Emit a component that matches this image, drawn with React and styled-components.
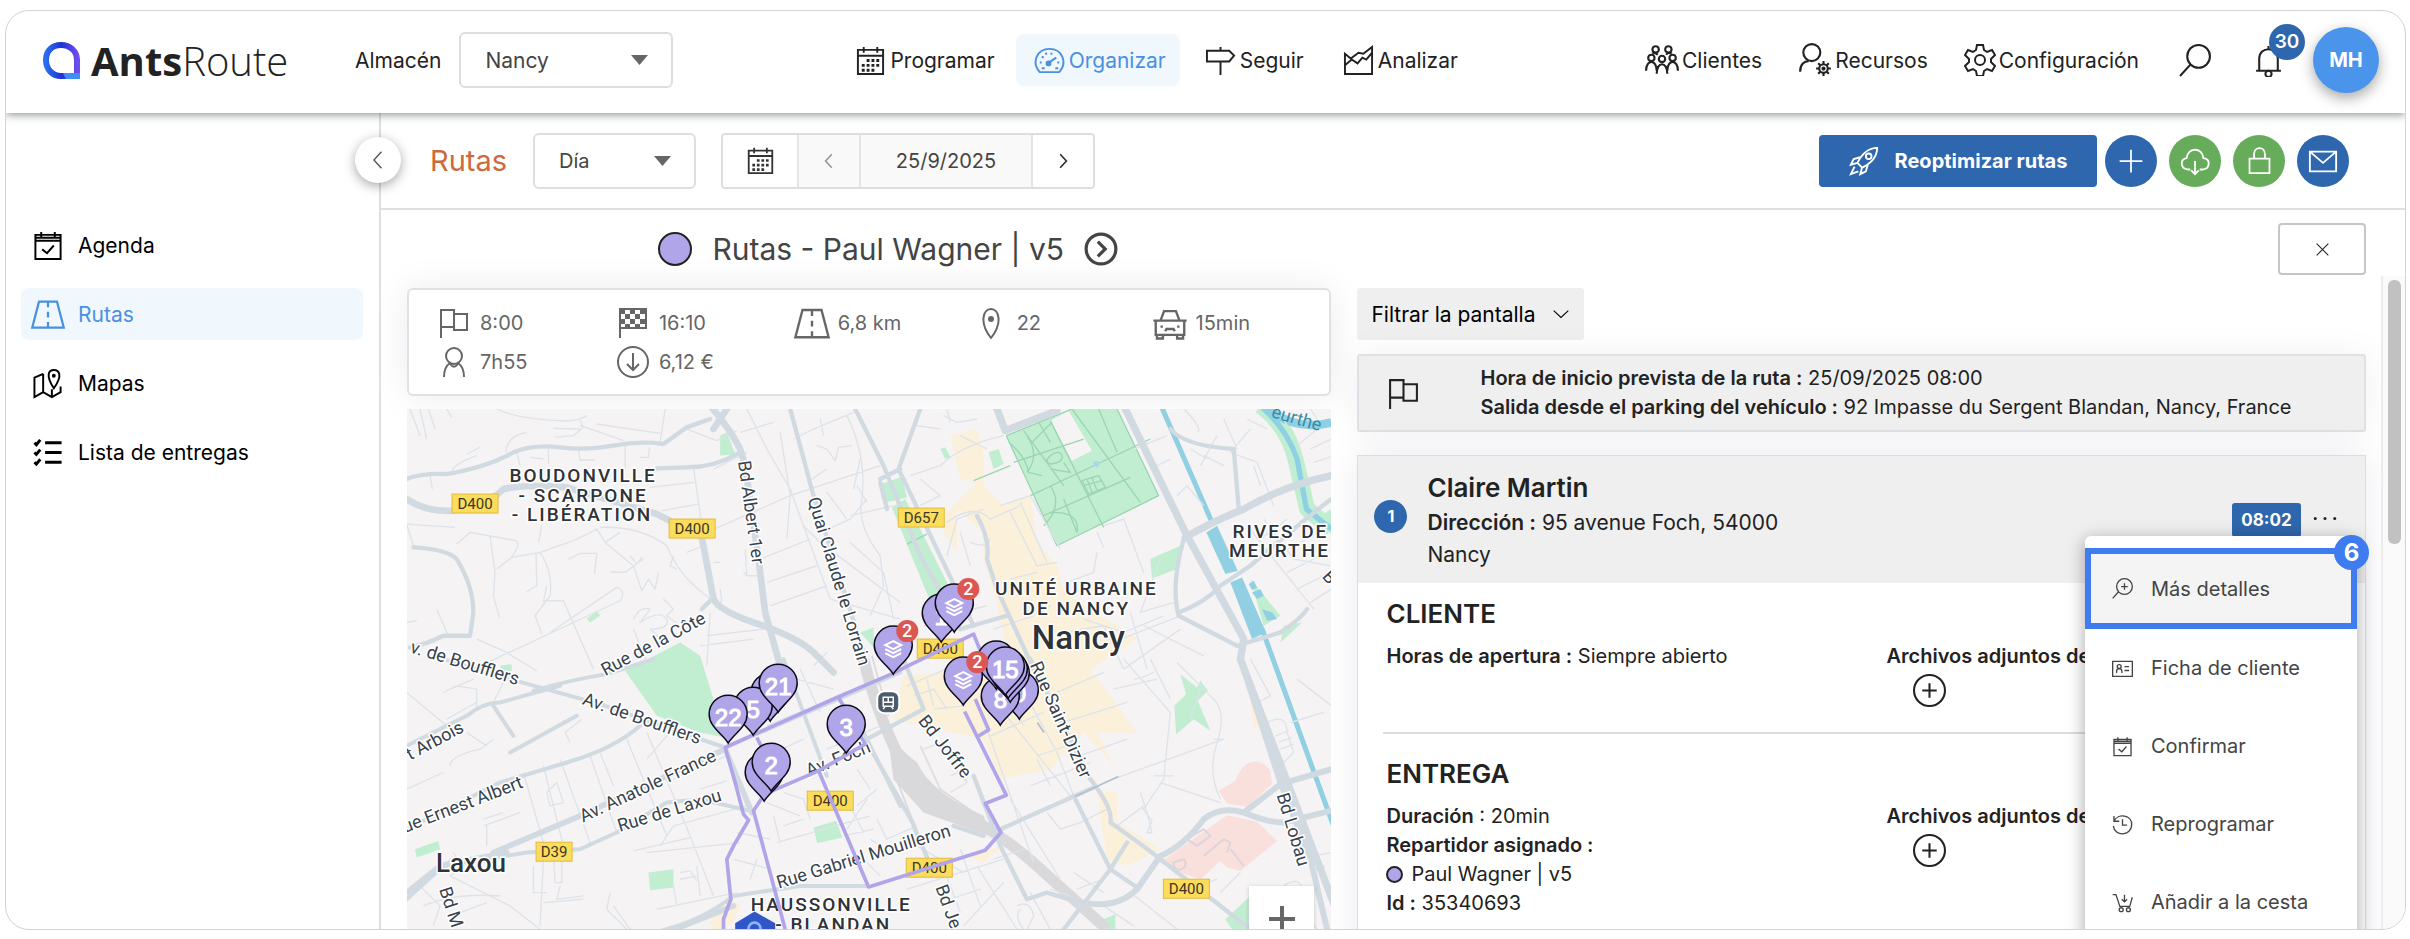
import React from 'react'
import styled, { createGlobalStyle } from 'styled-components'

const GlobalStyle = createGlobalStyle`
  * {
    box-sizing: border-box;
  }
  body {
    margin: 0;
    background: #ffffff;
    color: #222222;
    font-family: Inter, "Open Sans", sans-serif;
    font-size: 20px;
  }
  button, input, select {
    font: inherit;
    color: inherit;
    margin: 0;
  }
  h1, h2, h3, p, ul {
    margin: 0;
    padding: 0;
  }
  b {
    font-weight: 600;
  }
`

const Frame = styled.div`
  display: flex;
  flex-direction: column;
  height: calc(100vh - 19px);
  margin: 10px 4px 9px 5px;
  border: 1px solid #d2d3d5;
  border-radius: 24px;
  overflow: hidden;
`
const Header = styled.header`
  display: flex;
  align-items: center;
  flex-shrink: 0;
  height: 102px;
  padding: 0 26px 4px 36px;
  font-size: 21px;
  box-shadow: 0 2px 8px rgba(40, 50, 50, 0.5);
  z-index: 2;
`
const Logo = styled.a`
  display: flex;
  align-items: center;
  gap: 10px;
  width: 247px;
  color: #222222;
  font-family: "Open Sans", sans-serif;
  font-size: 40px;
  font-weight: 300;
  text-decoration: none;
  b {
    font-weight: 700;
  }
`
const DepotLabel = styled.label`
  margin: 0 18px 0 66px;
`
const SelectBox = styled.div`
  position: relative;
  width: ${(p) => p.$width};
  svg {
    position: absolute;
    right: 25px;
    top: 23px;
    pointer-events: none;
  }
`
const Select = styled.select`
  appearance: none;
  width: 100%;
  height: 56px;
  padding: 0 24px;
  border: 2px solid #dedede;
  border-radius: 6px;
  background: #ffffff;
  color: #444444;
`
const Nav = styled.nav`
  display: flex;
  gap: 7px;
  margin-left: 164px;
`
const NavLink = styled.a`
  display: flex;
  align-items: center;
  gap: 4px;
  height: 52px;
  padding: 0 14px 0 18px;
  border-radius: 8px;
  background: ${(p) => (p.$active ? '#f0f7fd' : 'transparent')};
  color: ${(p) => (p.$active ? '#4a90e2' : '#222222')};
  text-decoration: none;
`
const Tools = styled.div`
  display: flex;
  align-items: center;
  gap: 40px;
  margin-left: auto;
`
const ToolNav = styled.nav`
  display: flex;
  gap: 36px;
`
const ToolLink = styled.a`
  display: flex;
  align-items: center;
  gap: 3px;
  color: #222222;
  text-decoration: none;
`
const BareButton = styled.button`
  display: flex;
  padding: 0;
  border: none;
  background: none;
  cursor: pointer;
`
const BellButton = styled(BareButton)`
  position: relative;
  margin-right: -12px;
`
const Count = styled.span`
  position: absolute;
  left: 17px;
  top: -20px;
  width: 36px;
  height: 36px;
  border-radius: 50%;
  background: #2e67ad;
  color: #ffffff;
  font-size: 19px;
  font-weight: 600;
  line-height: 36px;
  text-align: center;
`
const Avatar = styled.button`
  width: 66px;
  height: 66px;
  border: none;
  border-radius: 50%;
  background: #4a94ec;
  color: #ffffff;
  font-size: 20px;
  font-weight: 700;
  box-shadow: 0 5px 14px rgba(0, 0, 0, 0.35);
`
const Body = styled.div`
  display: flex;
  flex: 1;
  min-height: 0;
`
const Sidebar = styled.aside`
  position: relative;
  flex-shrink: 0;
  width: 375px;
  padding: 106px 16px 0 15px;
  border-right: 2px solid #dedfe0;
  font-size: 21px;
`
const Collapse = styled.button`
  position: absolute;
  top: 24px;
  right: -22px;
  display: flex;
  align-items: center;
  justify-content: center;
  width: 46px;
  height: 46px;
  padding: 0;
  border: none;
  border-radius: 50%;
  background: #ffffff;
  color: #555555;
  box-shadow: 0 3px 12px rgba(0, 0, 0, 0.35);
  z-index: 1;
`
const SideList = styled.ul`
  display: grid;
  gap: 17px;
  list-style: none;
`
const SideLink = styled.a`
  display: flex;
  align-items: center;
  gap: 11px;
  height: 52px;
  padding-left: 8px;
  border-radius: 8px;
  background: ${(p) => (p.$active ? '#f0f7fd' : 'transparent')};
  color: ${(p) => (p.$active ? '#4a90e2' : '#000000')};
  text-decoration: none;
  svg {
    width: 38px;
  }
`
const Main = styled.main`
  display: flex;
  flex: 1;
  flex-direction: column;
  min-width: 0;
`
const Toolbar = styled.div`
  display: flex;
  align-items: center;
  flex-shrink: 0;
  height: 97px;
  padding: 0 56px 0 49px;
  border-bottom: 2px solid #dfe0e1;
`
const PageTitle = styled.h1`
  margin-right: 26px;
  color: #cc6a3c;
  font-size: 29px;
  font-weight: 400;
`
const DateGroup = styled.div`
  display: flex;
  height: 56px;
  margin-left: 25px;
  border: 2px solid #dedede;
  border-radius: 4px;
  overflow: hidden;
`
const DateButton = styled.button`
  display: flex;
  align-items: center;
  justify-content: center;
  width: ${(p) => (p.$wide ? '76px' : '60px')};
  padding: 0;
  border: none;
  border-right: ${(p) => (p.$wide ? '2px solid #e4e4e4' : 'none')};
  background: ${(p) => (p.$muted ? '#f9f9f9' : '#ffffff')};
  color: ${(p) => (p.$muted ? '#999999' : '#333333')};
`
const DateInput = styled.input`
  width: 174px;
  border: 2px solid #e4e4e4;
  border-width: 0 2px;
  border-radius: 0;
  background: #f9f9f9;
  color: #444444;
  text-align: center;
`
const Actions = styled.div`
  display: flex;
  gap: 12px;
  margin-left: auto;
`
const PrimaryButton = styled.button`
  display: flex;
  align-items: center;
  justify-content: center;
  gap: 16px;
  width: 278px;
  height: 52px;
  margin-right: -4px;
  padding: 0;
  border: none;
  border-radius: 4px;
  background: #2e67ad;
  color: #ffffff;
  font-weight: 700;
`
const RoundButton = styled.button`
  display: flex;
  align-items: center;
  justify-content: center;
  width: 52px;
  height: 52px;
  padding: 0;
  border: none;
  border-radius: 50%;
  background: ${(p) => (p.$green ? '#67ac5b' : '#2e67ad')};
  color: #ffffff;
`
const TitleRow = styled.div`
  display: grid;
  grid-template-columns: minmax(0, 11fr) minmax(0, 12fr);
  gap: 26px;
  align-items: center;
  flex-shrink: 0;
  height: 66px;
  padding: 12px 39px 0 26px;
`
const RouteTitle = styled.h2`
  display: flex;
  align-items: center;
  justify-content: center;
  gap: 20px;
  padding-left: 38px;
  color: #444444;
  font-size: 30px;
  font-weight: 400;
`
const Dot = styled.span`
  display: inline-block;
  flex-shrink: 0;
  width: ${(p) => p.$size};
  height: ${(p) => p.$size};
  border: 2px solid #222222;
  border-radius: 50%;
  background: #b1a5ea;
`
const CloseButton = styled.button`
  display: flex;
  align-items: center;
  justify-content: center;
  justify-self: end;
  width: 88px;
  height: 52px;
  border: 2px solid #c6c6c6;
  border-radius: 4px;
  background: #ffffff;
`
const Content = styled.div`
  display: flex;
  flex: 1;
  min-height: 0;
`
const Columns = styled.div`
  display: grid;
  flex: 1;
  grid-template-columns: minmax(0, 11fr) minmax(0, 12fr);
  gap: 26px;
  align-items: start;
  padding: 12px 15px 0 26px;
`
const Track = styled.div`
  width: 24px;
  padding: 4px 5px;
  border-left: 2px solid #ececec;
  background: #fafafa;
`
const Thumb = styled.div`
  width: 13px;
  height: 264px;
  border-radius: 6px;
  background: #c1c1c1;
`
const Stats = styled.div`
  display: grid;
  grid-template-columns: repeat(5, 1fr);
  align-content: start;
  height: 108px;
  padding: 13px 0 0 26px;
  border: 2px solid #e0e1e2;
  border-radius: 6px;
  background: #ffffff;
  box-shadow: 0 0 36px rgba(30, 30, 60, 0.08);
`
const Stat = styled.div`
  display: flex;
  align-items: center;
  gap: 7px;
  height: 39px;
  color: #666666;
  svg {
    flex-shrink: 0;
    width: 38px;
  }
`
const MapBox = styled.div`
  position: relative;
  margin-top: 13px;
`
const MapSvg = styled.svg`
  display: block;
  width: 100%;
  height: auto;
`
const ZoomButton = styled.button`
  position: absolute;
  top: 477px;
  right: 17px;
  display: flex;
  align-items: center;
  justify-content: center;
  width: 65px;
  height: 65px;
  border: none;
  background: #ffffff;
  color: #666666;
  box-shadow: 0 1px 4px rgba(0, 0, 0, 0.2);
`
const FilterButton = styled.button`
  display: flex;
  align-items: center;
  gap: 16px;
  height: 52px;
  padding: 0 14px;
  border: none;
  border-radius: 3px;
  background: #efefef;
  color: #000000;
  font-size: 21px;
`
const Banner = styled.section`
  display: flex;
  align-items: center;
  gap: 60px;
  height: 78px;
  margin-top: 14px;
  padding: 0 28px;
  border: 2px solid #e0e1e4;
  border-radius: 3px;
  background: #efefef;
  box-shadow: 0 0 36px rgba(30, 30, 90, 0.06);
  line-height: 29px;
`
const Stop = styled.article`
  margin-top: 23px;
  border: 1px solid #dcdde0;
  box-shadow: 0 0 36px rgba(30, 30, 90, 0.08);
`
const StopHead = styled.div`
  position: relative;
  display: flex;
  align-items: center;
  height: 127px;
  padding: 0 28px 0 16px;
  background: #efefef;
  font-size: 21px;
  line-height: 32px;
`
const StopNumber = styled.span`
  width: 33px;
  height: 33px;
  margin: 0 20px 6px 0;
  border-radius: 50%;
  background: #2e67ad;
  color: #ffffff;
  font-size: 16px;
  font-weight: 700;
  line-height: 33px;
  text-align: center;
`
const StopInfo = styled.div`
  width: 400px;
`
const StopName = styled.h3`
  font-size: 26px;
  line-height: 38px;
  font-weight: 600;
`
const TimeTag = styled.span`
  width: 69px;
  height: 34px;
  margin: 0 12px 0 auto;
  border-radius: 3px;
  background: #2e67ad;
  color: #ffffff;
  font-size: 17px;
  font-weight: 700;
  line-height: 34px;
  text-align: center;
`
const Section = styled.section`
  display: grid;
  grid-template-columns: 500px 1fr;
  align-content: start;
  height: ${(p) => p.$height};
  margin: 0 25px;
  padding: ${(p) => p.$pad} 3px 0;
  border-bottom: 2px solid #dcdcdc;
  line-height: 29px;
`
const SectionTitle = styled.h3`
  grid-column: 1 / 3;
  margin-bottom: 11px;
  font-size: 26px;
  line-height: 34px;
  font-weight: 600;
`
const Assigned = styled.p`
  display: flex;
  align-items: center;
  gap: 8px;
`
const AddButton = styled(BareButton)`
  margin: 3px 0 0 27px;
`
const Menu = styled.ul`
  position: absolute;
  top: 80px;
  right: 8px;
  width: 272px;
  padding: 12px 0;
  border-radius: 6px;
  background: #ffffff;
  box-shadow: 0 4px 18px rgba(0, 0, 0, 0.35);
  font-size: 20px;
  list-style: none;
  z-index: 3;
`
const MenuButton = styled.button`
  display: flex;
  align-items: center;
  gap: 18px;
  width: 100%;
  height: ${(p) => (p.$active ? '81px' : '78px')};
  padding: ${(p) => (p.$active ? '0 21px' : '0 27px')};
  border: ${(p) => (p.$active ? '6px solid #3f7cf0' : 'none')};
  background: ${(p) => (p.$active ? '#f4f4f4' : '#ffffff')};
  color: #444444;
`
const StepBadge = styled.span`
  position: absolute;
  top: -1px;
  right: -12px;
  width: 35px;
  height: 35px;
  border-radius: 50%;
  background: #3f7cf0;
  color: #ffffff;
  font-size: 24px;
  font-weight: 700;
  line-height: 35px;
  text-align: center;
`

// all line icons share a 32 unit grid
const shapes = {
  calendar: (
    <>
      <path d="M3 5h26v25H3zM3 11h26M9 2v6M23 2v6" />
      <path d="M12 16h3M17 16h3M22 16h3M7 21h3M12 21h3M17 21h3M22 21h3M7 26h3M12 26h3M17 26h3" strokeWidth="3" />
    </>
  ),
  check: <path d="M3 5h26v25H3zM3 8h26M9 2v5M23 2v5M3 11h26M10 20l5 4 7-8" />,
  gauge: (
    <>
      <path d="M6 28C-3 18 3 4 16 4s19 14 10 24zM14 19l9-6" />
      <circle cx="15" cy="19" r="2" fill="currentColor" />
      <path d="M6 18h2M24 18h2M8 12l2 1M12 8l1 2M18 8v2M8 24h3M22 24h3" />
    </>
  ),
  sign: <path d="M16 2v4M2 6h23l5 5-5 6H2zM16 17v14" />,
  area: <path d="M2 30V9l6 5 8-6 5 1 9-7v28zM2 21l7-6 6 4 5-6 4 2 6-7" />,
  people: (
    <>
      <circle cx="10" cy="6" r="3" />
      <circle cx="22" cy="6" r="3" />
      <circle cx="6" cy="14" r="3" />
      <circle cx="16" cy="15" r="3" />
      <circle cx="26" cy="14" r="3" />
      <path d="M1 26c0-11 10-11 10 0M21 26c0-11 10-11 10 0M11 29c0-12 10-12 10 0M7 10c1-1 3-1 5 1M20 11c1-2 4-2 5-1" />
    </>
  ),
  person: (
    <>
      <circle cx="13" cy="9" r="8" />
      <path d="M2 27c0-7 4-10 8-10" />
      <circle cx="24" cy="24" r="4" />
      <circle cx="24" cy="24" r="1" />
      <path d="M24 17v3M24 28v3M17 24h3M28 24h3M19 19l2 2M27 27l2 2M29 19l-2 2M21 27l-2 2" />
    </>
  ),
  gear: (
    <>
      <path d="M13 1h6l1 5 3 2 5-2 3 5-4 4v3l4 4-3 5-5-2-3 2-1 5h-6l-1-5-3-2-5 2-3-5 4-4v-3l-4-4 3-5 5 2 3-2z" />
      <circle cx="16" cy="16" r="5" />
    </>
  ),
  search: (
    <>
      <circle cx="19" cy="12" r="11" />
      <path d="M11 20L1 31" />
    </>
  ),
  bell: (
    <>
      <path d="M4 26h24M7 26V14c0-12 18-12 18 0v12M16 2v3" />
      <circle cx="16" cy="29" r="3" />
    </>
  ),
  road: <path d="M8 5h16l6 23H2zM16 5v5M16 14v5M16 23v5" />,
  map: (
    <>
      <path d="M11 6L2 10v20l9-5 9 5 9-5V19M11 6v19M20 30v-8" />
      <path d="M22 21c-9-14-5-19 0-19s10 5 0 19z" />
      <circle cx="22" cy="8" r="1" />
    </>
  ),
  list: <path d="M13 6h17M13 16h17M13 26h17M2 6l2 2 4-5M2 16l2 2 4-5M2 26l2 2 4-5" strokeWidth="3" />,
  left: <path d="M21 4L10 16l11 12" />,
  right: <path d="M11 4l11 12-11 12" />,
  down: <path d="M3 10l13 12 13-12" />,
  rocket: (
    <>
      <path d="M9 18C14 8 20 2 30 2c0 10-6 16-16 21zM12 12L5 14l-3 6 7-2M20 20l-2 7-6 3 2-7M6 22l-4 8 8-3" />
      <circle cx="21" cy="11" r="3" />
    </>
  ),
  plus: <path d="M16 3v26M3 16h26" />,
  cloud: <path d="M11 25H8c-8-1-8-11-1-12 1-12 17-12 18 0 8 1 7 11 0 12h-4M16 16v14M12 26l4 4 4-4" />,
  lock: <path d="M5 14h22v16H5zM10 14V9c0-9 12-9 12 0v5" />,
  mail: <path d="M2 6h28v21H2zM2 6l14 12L30 6" />,
  next: (
    <>
      <circle cx="16" cy="16" r="14" strokeWidth="3" />
      <path d="M13 9l7 7-7 7" strokeWidth="3" />
    </>
  ),
  close: <path d="M5 5l22 22M27 5L5 27" />,
  flag: <path d="M3 31V3h13v17H3M16 7h13v16H16z" />,
  finish: (
    <>
      <path d="M3 31V2h26v19H3" />
      <path d="M3 2h5v5H3zM13 2h5v5h-5zM23 2h6v5h-6zM8 7h5v5H8zM18 7h5v5h-5zM3 12h5v5H3zM13 12h5v5h-5zM23 12h6v5h-6zM8 17h5v4H8zM18 17h5v4h-5z" fill="currentColor" stroke="none" />
    </>
  ),
  pin: (
    <>
      <path d="M16 31C4 16 8 2 16 2s12 14 0 29z" />
      <circle cx="16" cy="12" r="2" fill="currentColor" />
    </>
  ),
  car: <path d="M8 14l3-8h10l3 8M4 14h24v12H4zM2 14h28M5 26v3h5v-3M22 26v3h5v-3M8 19h2M22 19h2M12 23l1-2h6l1 2" />,
  driver: (
    <>
      <circle cx="16" cy="10" r="8" />
      <path d="M6 31c0-8 3-12 6-14 2 5 6 5 8 0 3 2 6 6 6 14" />
    </>
  ),
  cost: (
    <>
      <circle cx="16" cy="16" r="15" />
      <path d="M16 7v17M10 18l6 6 6-6" />
    </>
  ),
  add: (
    <>
      <circle cx="16" cy="16" r="15" />
      <path d="M16 9v14M9 16h14" />
    </>
  ),
  dots: (
    <g fill="currentColor" stroke="none">
      <circle cx="3" cy="14" r="2" />
      <circle cx="16" cy="14" r="2" />
      <circle cx="29" cy="14" r="2" />
    </g>
  ),
  detail: (
    <>
      <circle cx="19" cy="13" r="12" />
      <path d="M10 21L1 31M19 8v10M14 13h10" />
    </>
  ),
  card: (
    <>
      <path d="M1 5h30v23H1zM19 13h7M19 19h7" />
      <circle cx="11" cy="13" r="3" />
      <path d="M7 23v-3c0-5 8-5 8 0v3" />
    </>
  ),
  history: <path d="M3 3v8h8M3 11C9-2 31 1 30 17 29 34 4 35 2 18M16 8v9h7" />,
  cart: (
    <>
      <path d="M1 4h5l6 18h15l4-14M19 4v11M15 11l4 4 4-4" />
      <circle cx="14" cy="27" r="3" />
      <circle cx="25" cy="27" r="3" />
    </>
  ),
}

const Icon = ({ name, size = 30, stroke = 2 }) => (
  <svg width={size} height={size} viewBox="0 0 32 32" fill="none" stroke="currentColor" strokeWidth={stroke} aria-hidden="true">
    {shapes[name]}
  </svg>
)

const Caret = () => (
  <svg width="17" height="10" viewBox="0 0 17 10" aria-hidden="true">
    <path d="M0 0h17L8.500 10z" fill="#666666" />
  </svg>
)

const LogoMark = () => (
  <svg width="39" height="39" viewBox="0 0 39 39" aria-hidden="true">
    <defs>
      <linearGradient id="mark" x1="0" y1="0" x2="1" y2="0">
        <stop offset="0" stopColor="#2b6cf0" />
        <stop offset="0.500" stopColor="#1f34d6" />
        <stop offset="1" stopColor="#6b4cf0" />
      </linearGradient>
    </defs>
    <path d="M4 19C4 10 10 4 19 4s16 6 16 15v16H19C10 35 4 28 4 19z" fill="none" stroke="url(#mark)" strokeWidth="6" />
    <path d="M21 32h17v6H24z" fill="#3f8df5" />
  </svg>
)

const navItems = [
  ['calendar', 'Programar'],
  ['gauge', 'Organizar'],
  ['sign', 'Seguir'],
  ['area', 'Analizar'],
]
const toolItems = [
  ['people', 'Clientes', 34],
  ['person', 'Recursos', 34],
  ['gear', 'Configuración', 32],
]
const sideItems = [
  ['check', 'Agenda'],
  ['road', 'Rutas'],
  ['map', 'Mapas'],
  ['list', 'Lista de entregas'],
]
const stats = [
  ['flag', '8:00'],
  ['finish', '16:10'],
  ['road', '6,8 km'],
  ['pin', '22'],
  ['car', '15min'],
  ['driver', '7h55'],
  ['cost', '6,12 €'],
]
const menuItems = [
  ['detail', 'Más detalles'],
  ['card', 'Ficha de cliente'],
  ['check', 'Confirmar'],
  ['history', 'Reprogramar'],
  ['cart', 'Añadir a la cesta'],
]

const mapLabels = [
  ['BOUDONVILLE', 176, 73],
  ['- SCARPONE', 176, 93],
  ['- LIBÉRATION', 175, 112],
  ['UNITÉ URBAINE', 669, 186],
  ['DE NANCY', 669, 206],
  ['RIVES DE', 873, 129],
  ['MEURTHE', 872, 148],
  ['HAUSSONVILLE', 424, 502],
  ['- BLANDAN', 426, 522],
]
// text, x, y, angle, anchor
const streets = [
  ['Bd Albert 1er', 338, 104, 82, 'middle'],
  ['Quai Claude le Lorrain', 426, 174, 73, 'middle'],
  ['Rue de la Côte', 249, 240, -28, 'middle'],
  ['v. de Boufflers', 110, 276, 17, 'end'],
  ['Av. de Boufflers', 233, 315, 19, 'middle'],
  ['t Arbois', 58, 322, -28, 'end'],
  ['ue Ernest Albert', 117, 378, -21, 'end'],
  ['Av. Anatole France', 243, 382, -25, 'middle'],
  ['Rue de Laxou', 264, 407, -17, 'middle'],
  ['Bd M', 32, 480, 72, 'start'],
  ['Av. Foch', 433, 355, -22, 'middle'],
  ['Bd Joffre', 533, 341, 52, 'middle'],
  ['Rue Saint-Dizier', 648, 313, 66, 'middle'],
  ['Bd Lobau', 880, 422, 73, 'middle'],
  ['Rue Gabriel Mouilleron', 458, 453, -17, 'middle'],
  ['Bd Je', 528, 478, 70, 'start'],
  ['B', 914, 168, 48, 'start'],
]
const shields = [
  ['D400', 68, 95],
  ['D400', 285, 120],
  ['D657', 514, 109],
  ['D400', 533, 240],
  ['D39', 147, 443],
  ['D400', 423, 392],
  ['D400', 522, 459],
  ['D400', 779, 480],
]
// x, y, label, badge
const pins = [
  [534, 204, '1'],
  [547, 194, 'stack', '2'],
  [486, 236, 'stack', '2'],
  [612, 281, '0'],
  [593, 287, '8'],
  [589, 251, ''],
  [603, 264, ''],
  [601, 260, ''],
  [598, 257, '15'],
  [556, 267, 'stack', '2'],
  [363, 283, ''],
  [346, 297, '5'],
  [371, 274, '21'],
  [321, 305, '22'],
  [357, 363, ''],
  [364, 353, '2'],
  [439, 315, '3'],
]

const Pin = ({ x, y, label, badge }) => (
  <g transform={`translate(${x} ${y})`}>
    <path d="M0 29C-5 20-19 13-19 0A19 19 0 0 1 19 0C19 13 5 20 0 29z" fill="#b1a5ea" stroke="#0c0a18" strokeWidth="1.500" />
    {label === 'stack' ? (
      <g fill="none" stroke="#ffffff" strokeWidth="2">
        <path d="M-8 0l8-4 8 4-8 4zM-8 4l8 4 8-4M-8 8l8 4 8-4" />
      </g>
    ) : (
      <text y="12" textAnchor="middle" fontFamily="Liberation Sans, sans-serif" fontSize="24" fill="#ffffff" stroke="#ffffff">
        {label}
      </text>
    )}
    {badge && (
      <>
        <circle cx="14" cy="-14" r="11" fill="#dc5752" />
        <text x="14" y="-8" textAnchor="middle" fontSize="18" fontWeight="500" fill="#ffffff">{badge}</text>
      </>
    )}
  </g>
)

const CityMap = () => (
  <MapSvg viewBox="0 0 924 540" role="img" aria-label="Mapa de Nancy" fontFamily="Roboto, sans-serif">
    <rect width="924" height="540" fill="#f5f3f4" />
    <g transform="scale(0.333333)" fill="none" strokeLinejoin="round">
      {/* built up and green areas */}
      <g fill="#fbf0da">
        <path transform="translate(1329 -30)" d="M300 110L380 90 400 160 400 260 460 320 540 290 560 430 620 500 640 580 860 720 720 810 860 1000 740 1000 790 1100 700 1000 600 1110 450 1140 400 1020 130 960 160 830 480 800 440 610 400 480 400 400 320 330 320 460 280 400 290 340 380 250 330 240z" />
        <path transform="translate(1329 750)" d="M740 390l60 10v90l130 80-100 50-60-20-20-130zM1200 130l20 0 20 70-30 10zM350 590l110-30-60 50z" />
        <path transform="translate(-21 750)" d="M980 710l40 30-20 50-60 30-10-30z" />
      </g>
      <g fill="#c1edd0">
        <path transform="translate(1329 -30)" d="M468 110L665 30H800L925 290 620 440zM90 255l65-20 15 60-65 15zM125 325l40-25 150 300-70 20zM900 480l90-40-10 70-75 28zM1290 730l10-50 55-10zM1410 350l33-20v80zM415 160l30-10 15 45-30 15zM1200 540l90 110-50 30zM270 150l15-5 15 30-15 5zM30 700l40-15v60z" />
        <path transform="translate(-21 -30)" d="M960 110l20-10 25 65-45 5zM1440 260l60-25v50l-55 15zM560 660l30-25 10 15-30 20z" />
        <path transform="translate(-21 750)" d="M675 35L840-50 900-10 975 235 900 220 770 170zM45 570l70-25 5 25-70 25zM745 640l75-10v55l-70 8zM1240 505l68-20 18 50-75 17zM300 20l35-5v20l-25 10z" />
        <path transform="translate(1329 750)" d="M990 45l50 40 10-20 22 30-30 30 38 90-50-35-53 45-5-85 35-35zM1125 780l70-65v95h-50zM760 780l35-15v45h-20z" />
      </g>
      <path transform="translate(1329 -30)" d="M600 65l55-30 70 120-60 30z" fill="#f5f3f4" />
      <g fill="#fae0dc" transform="translate(1329 750)">
        <path d="M1105 395l50-30c20-60 70-80 105-30l5 40-75 68-60-10z" />
        <path d="M1070 510l60-42 90 20 60 57-110 90-40-10-20-20-60 55-60-20-60-30z" />
      </g>

      {/* park paths */}
      <g stroke="#9bd5b3" strokeWidth="4" transform="translate(1329 -30)">
        <path d="M468 110L665 30M800 30L925 290L620 440L468 110M520 95L640 260M600 65L760 385M665 30L870 310M745 30L800 160M490 190L700 120M540 290L900 120M580 350L840 235M530 110q40 60 0 110M560 60l40 70M545 130l60-60M600 170q30-20 35 0t-35 25q-20-10 0-25M580 380q60-60 20-120M610 340q80 0 70 60M640 300l40 100M475 130q50 40 60 90l40 10M600 210l60 10-20-30M170 435l60-30M370 245l110-45" />
        <path d="M695 245l50-15 20 35-50 20zM710 240l15 40M725 235l15 40M700 260l55-15" />
      </g>

      {/* water */}
      <g transform="translate(1329 -30)">
        <path d="M1230 20q80 60 105 160l35 150 73 60" stroke="#c1edd0" strokeWidth="48" />
        <path d="M1230 20q80 70 110 160l28 150 75 60" stroke="#8fd1e4" strokeWidth="16" />
        <path d="M1240 20q90 80 203 50" stroke="#8fd1e4" strokeWidth="26" />
        <path d="M932 20L1085 370M1235 690L1460 1310" stroke="#90d0e2" strokeWidth="15" />
        <path d="M1068 400l32-20 62 135-37 10zM1140 550l35-15 72 165-42 20zM1195 555l15-10 10 20-15 8zM1205 580l25-10 10 20-20 10zM1235 630l30 10 15 20-30 5z" fill="#90d0e2" />
        <circle cx="738" cy="195" r="9" fill="#a8d8ea" />
      </g>

      {/* railway */}
      <g stroke="#d9d9dc" transform="translate(1329 750)">
        <path d="M40 0q30 130 90 260 60 150 180 190 140 70 250 170l210 190" strokeWidth="34" />
        <path d="M110 200q20 60 90 110 40 90 200 160l20 60-200-70-90-100z" fill="#d9d9dc" />
        <path d="M25 0l80 210M65-10l50 180M130 340l60 150M210 260l60 130 130 90" strokeWidth="5" />
      </g>

      {/* side streets */}
      <g stroke="#dde3e9" strokeWidth="4">
        <path transform="translate(-21 -30)" d="M290 30Q350 60 480 65 530 70 560 50M590 75l190 28M795 30l-15 100M540 65l10 20-30 25-55 5M460 88l80 2M540 80q60 20 130 45M155 215q15-25 75-45M318 160q2-50 62-60M90 230l7 40M445 150v45M350 160l10 40M675 140v70M535 155l5 28h45M720 175h25l3-30M20 375l145 10M20 375l20 65M170 435l40-35 140 25 5 15-20 35-45 35M270 412l15 108-5 70 18 65M335 475l85-15 100-35 70-35 25 40 85 70 25 75 20-35 20 30 10-50M615 430l45-30M420 460q40 60 30 130l-45 60 20 55M408 465l2 95-30 18M505 480l35-17h50l-7 62M630 518l45 2 55-40M690 470l20 25 15-20M430 605h60l90 205M430 610l10-50M450 700l200-135q30 10 10 40L220 810M600 385q120-5 200 55 40 100 140 165M880 205l30 210M750 265l130-15M785 335l110-20M920 400l250-110 270-90M1040 30l60 120 70 120 40 110 80 220M1140 100l30 190-10 130M1100 550l150-50M1110 620l170-60M1080 480l150-60M920 710l170-20M900 740l160-20M700 690l40 100M1300 460l200 150M1260 60l10 50M1340 50q60 120 45 250-15 80 55 170l10 90-40 90M1280 280l60 80M1400 300l-50 60-90 40M940 210l100-50M1020 100l100-30M820 470l-10 30 20 10M860 460l50-20M940 490h20M960 570l5 35-20 20M1030 520l10 10h30M1035 450l5 80M20 670l30-5M110 630l35 80M230 720l80 35 100 60M700 660q20-40 50-30l-30 40q60-40 80-10 10 30-50 30 40 30 20 50M790 600l30 30-20 20 40 30M860 90l90 35 60-30M390 175l40 5M240 145l-40 20M425 380l-10 50M930 640l-10 160M1250 140l30 10 25 35 10-40 40-5M30 30l30 80M60 30l20 90M85 30l20 60M140 30l15 25M1180 120l60-30 120-50M1220 250l60-40M1210 380l80 80M1290 600l210 60" />
        <path transform="translate(1329 -30)" d="M200 80l70 10M280 50l40 20 60-10M180 230l90-30q60-60 190-90M290 30l10 40M330 110l80 40M210 240l60 50-60 30M290 470l30-110 80-30M290 370q80-60 130-10l90-40M450 320l90-30 90 160M330 400l30 100M360 430q50 20 60-10M480 340l80 160 60-10M510 310l80 180M740 400l20 45M760 380l60-20 60 160M740 460l-10 60-80 30M930 480l-60 160 100-30M1000 30q60 60 40 70M1060 170l60 30M1100 110l-50 90M980 290l30-30 50 60M1020 150l50 30M1120 60l40 90M1190 60l60 30M1200 90l-60 70 80 30 50 130M1380 30l20 30M1380 150l63-30M1390 190l60-20M1340 140l60-50M1160 340l90-40M1210 200l20 60M1240 360l90 120 110 20M1190 380l200 250M1230 420l80-60M1270 470l120-60M1310 520l100-50M1340 570l80-40M1380 610l63-40M640 700l120-20 60 130M700 660l120 40 120-50M760 740l230-90M840 640l50 170M880 680l180 90M820 810l170-120M540 640l60-20M480 540l80-20M430 690l120-40M0 430l100 90 30 140M0 350l130-30M20 260l30 50M30 180l-20 90M300 590l90-10M330 640l80-20M220 680l70-20M1290 40l20 40M850 150l100-40M900 210l60-30" />
        <path transform="translate(-21 750)" d="M20 100l120 100M150 90l70-30M130 100l40-20 60 10v60M20 390l110-50M250 480l60-20M280 130l30-60M370 340l60 210M430 320l60 240M480 300l90 250M510 250l-15-30 50-40M570 290l80 230M600 280l40 100M680 240l120 290M740 220l130 310M800 230l-60 70M820 360l160-70M900 390l80-25M780 560l40-60 220-60M700 575l170-40M740 580l280-30M770 750l240-50M870 530l70 180M820 680l10 60M890 620l10 90M840 640l30-5 20 30M840 660l50-10M630 700l-10 50 60 60M400 620v80h40M430 600l-10 200M460 580l5 90h20v-80M480 680l-10 40 80-10M430 730l120-10M640 740l50 70M490 560v40M250 500l110-40M260 500v60M440 400l30-30 20 60-40 10zM160 580l30 40-40 30 180 90 90 70M120 640l30-40 60-5M70 740q90-40 230-30M180 760l80-30M60 680l60 60-20 60M150 320q0-30 90-50l40-30M200 220l60 40M140 180l90-50M1150 400l60 20 20 60M1100 430l100 40M1130 550l280-80M1120 470l20 80M1150 500l60-20M1080 300l130-60M1100 200l120-50M1190 60l110 30M1200 30l60 130M1240 20l40-40M1280 270l160-70M1400 420l-60 90M1330 530l90-20M1380 590l60 60M1330 400l60 120M1010 520l100 20M1000 600l110 30M1050 660l20-60" />
        <path transform="translate(1329 750)" d="M170 80l140-60M230 60l20 80M190 110l60-20 40 60M250 150l90-10M210 260l60 130M220 270l80-30M290 300l60 70M300 350l50-20M330 310l20 60-50 30M400 180l150 430M460 160l200 250M500 60l120 220 50 130M520 200l-30-60M560 290l90-30M560 300l40 80M540 380l180-70M420 230l160-70M620 100l140-60M640 190l190-60M660 300l170-60M820 0l140 160-20 200-60 90M790 90l130-30M900 0l60 120M760 370l360-130M850 60q20 0 60-20M970 350h-60M870 400l20 60 15 60h-15l15-35-30-40M800 500l80-60M930 370l180 60M980 10l110 110q40 40 10 130t10 170M1050 90l-30 90M1120 240h-30M1190 80l30 50 40-20M1200 0l60 110M1250 190q60-30 60 30l20 60-30 30-40-60M1275 230l40-15M1285 250l40-15M1290 270l40-15M1340 60l103 80M1320 190l100-30M590 460l40 50 60-20 80-40M480 420l150 240M430 600l90-30M540 700l60 110M510 750q-20 20 10 60M500 740q40-20 50 30l-20 40M600 690l60 20M670 640l90 60M680 690l80-30M760 740l90 60M840 700l140 110M940 720l160-60M1110 700l60-60M1280 690l60 30 60 90M1300 680q60-40 60 40M1380 640l40-20v60M1390 590l50-10M60 540l60 40M80 480l30 60 90-40M270 600l60 160M330 570l60 170M200 560l140 80M170 690l290-90M340 800l120-130M300 720l90-30M380 620l120 190M20 330l40 60M20 440l60-50" />
      </g>
      <path transform="translate(1329 750)" d="M1010 540l50-30 20 20-40 30zM970 610a18 18 0 1 0 30-10zM1060 590l60-50 20 10-10 30M1140 570l40 50" stroke="#dcd5dc" strokeWidth="6" />

      {/* main roads */}
      <g stroke="#d2dae1" strokeWidth="13" strokeLinecap="round">
        <path transform="translate(-21 -30)" d="M20 240q40-18 120-15 120-20 200-65 60-25 140-15t160-5 150-5l70-50 70-25M1010 165q-70 40-150 40l-90 3M1170 30l70 260 160 500M40 445q100 5 130 35 50 80 50 160l-10 70h-80q-50 25-100 35M905 630l30-30" />
        <path transform="translate(-21 -30)" d="M20 300q60 40 140 35 100-15 150-65 70-15 190-5l270 80 135 70 35 185q20 40 150 80 110 40 150 80l60 60M930 20q60 70 90 130l15 50 40 280 20 160 45 160M980 30l-40 60" strokeWidth="20" />
        <path transform="translate(1329 -30)" d="M10 20l90 180 110 270 80 140 40 80M210 30l-65 180 115 240 110 230M440 30l25 65 155-60M90 240l60-30M90 250l20 80M985 650l175 90 130-40q60-40 80-70M1000 420q-40 140-15 230M985 640q80-30 125-80l90-60q150-130 243-200M960 90q40 50 190 60l15 180M380 350q40 70 30 130l30 90 110 240M330 690l140-40" />
        <path transform="translate(1329 -30)" d="M820 20l185 380 175 320-10 60 290 760M1005 415q75-45 175-85 120-70 263-100M440 30l25 65 155-60" strokeWidth="22" />
        <path transform="translate(-21 750)" d="M130 0l200 60 270 75 300 105 75 25M400 95q120-35 220-50l140-45M20 260l180-90q50-40 100-40l180-50M280 140l60 90M20 510l280-140 200-60q140-40 220-110M20 720l110-100 250-40 160-10 110-50 150-90 100-10 150 35M760 820q140-30 240-110l200-30h200M1150 0l130 350M1380 200l120 240M975 265l525-225M330 280l200-110" strokeWidth="12" />
        <path transform="translate(-21 750)" d="M280 580l260-110 435-200 80 190M20 700l100-80 200-40M800 820l200-80" strokeWidth="17" />
        <path transform="translate(1329 750)" d="M160 0l60 150-170 90M50 250l140 245M370 350l80 210 80 160M310 500l90 30M450 510l280-125M670 410l110 220 80 55M540 0l180 360q70 90 60 130 100 70 150 110l270 210M640 810l140-180 50-80M530 720l60-20 100 30M190 500l60 140" />
        <path transform="translate(1329 750)" d="M700 730q100 20 160-40l70-100q70-30 130-110 50-40 120-20 70 30 120 30l140-35M1180 460l110-85 153-45M1170 0l120 370 90 230 50 210" strokeWidth="18" />
      </g>
      <path d="M2003 1162l130-60M1890 940l20 30" stroke="#b3bfcc" strokeWidth="5" />
    </g>

    {streets.map(([name, x, y, angle, anchor]) => (
      <text key={name + x} transform={`translate(${x} ${y}) rotate(${angle})`} textAnchor={anchor} fontSize="18" fill="#37424d" stroke="#ffffff" strokeWidth="3" paintOrder="stroke">
        {name}
      </text>
    ))}
    <text transform="translate(863 8) rotate(16)" fontSize="18" fill="#3b8ba5">eurthe</text>
    {shields.map(([name, x, y]) => (
      <g key={name + x}>
        <rect x={x - (name.length > 3 ? 23 : 18)} y={y - 10} width={name.length > 3 ? 46 : 36} height="19" fill="#fbdc5b" stroke="#e3bb3e" />
        <text x={x} y={y + 5} textAnchor="middle" fontSize="15" fill="#3c3726">{name}</text>
      </g>
    ))}
    <g fill="#2f3237" stroke="#ffffff" strokeWidth="3" paintOrder="stroke" textAnchor="middle" fontWeight="500">
      {mapLabels.map(([name, x, y]) => (
        <text key={name} x={x} y={y} fontSize="19" letterSpacing="2">{name}</text>
      ))}
      <text x="671" y="240" fontSize="33">Nancy</text>
      <text x="64" y="463" fontSize="26">Laxou</text>
    </g>

    {/* planned route, drawn over the labels */}
    <g transform="scale(0.333333) translate(-21 750)">
      <path d="M970 810v-30l22-60-12-120 20-40 45-77-15-18-25-95-30-105 335-150 163-70 50-25 197-95 20 50M1725 120l40 92-30 18M1693 157l125 251-63 25 47 87-47 53-350 110-150-348M1155 810l-95-355 33-50 162-70 140-80-80-140M1070 235l25 50" fill="none" stroke="#b1a5ea" strokeWidth="11" strokeLinejoin="round" />
      <path d="M1005 792l58-35 62 35v80h-120z" fill="#3056c8" />
      <circle cx="1063" cy="808" r="18" fill="none" stroke="#8fb4ff" strokeWidth="8" />
    </g>
    <g transform="translate(481 293)">
      <rect x="-11" y="-11" width="22" height="22" rx="7" fill="#4b5b6b" stroke="#ffffff" strokeWidth="2" />
      <path d="M-5-5h10v9H-5zM-5 0h10M0-5v5M-3 4l-2 3M3 4l2 3" fill="none" stroke="#ffffff" strokeWidth="1.500" />
    </g>
    {pins.map(([x, y, label, badge]) => (
      <Pin key={`${x}-${y}`} x={x} y={y} label={label} badge={badge} />
    ))}
  </MapSvg>
)

const Attachments = () => (
  <div>
    <b>Archivos adjuntos de</b>
    <AddButton type="button" aria-label="Añadir archivo">
      <Icon name="add" size={33} />
    </AddButton>
  </div>
)

const App = () => {
  return (
    <>
      <GlobalStyle />
      <Frame>
        <Header>
          <Logo href="#">
            <LogoMark />
            <span><b>Ants</b>Route</span>
          </Logo>
          <DepotLabel htmlFor="depot">Almacén</DepotLabel>
          <SelectBox $width="214px">
            <Select id="depot">
              <option>Nancy</option>
            </Select>
            <Caret />
          </SelectBox>
          <Nav>
            {navItems.map(([icon, text]) => (
              <NavLink key={text} href="#" $active={text === 'Organizar'}>
                <Icon name={icon} size={31} />
                {text}
              </NavLink>
            ))}
          </Nav>
          <Tools>
            <ToolNav>
              {toolItems.map(([icon, text, size]) => (
                <ToolLink key={text} href="#">
                  <Icon name={icon} size={size} />
                  {text}
                </ToolLink>
              ))}
            </ToolNav>
            <BareButton type="button" aria-label="Buscar">
              <Icon name="search" size={33} />
            </BareButton>
            <BellButton type="button" aria-label="Notificaciones">
              <Icon name="bell" size={33} />
              <Count>30</Count>
            </BellButton>
            <Avatar type="button">MH</Avatar>
          </Tools>
        </Header>
        <Body>
          <Sidebar>
            <Collapse type="button" aria-label="Contraer menú">
              <Icon name="left" size={22} />
            </Collapse>
            <SideList>
              {sideItems.map(([icon, text]) => (
                <li key={text}>
                  <SideLink href="#" $active={text === 'Rutas'}>
                    <Icon name={icon} size={icon === 'road' ? 36 : 31} />
                    {text}
                  </SideLink>
                </li>
              ))}
            </SideList>
          </Sidebar>
          <Main>
            <Toolbar>
              <PageTitle>Rutas</PageTitle>
              <SelectBox $width="163px">
                <Select aria-label="Periodo">
                  <option>Día</option>
                </Select>
                <Caret />
              </SelectBox>
              <DateGroup>
                <DateButton type="button" $wide aria-label="Abrir calendario">
                  <Icon name="calendar" size={29} />
                </DateButton>
                <DateButton type="button" $muted aria-label="Día anterior">
                  <Icon name="left" size={18} stroke={3} />
                </DateButton>
                <DateInput type="text" aria-label="Fecha" defaultValue="25/9/2025" />
                <DateButton type="button" aria-label="Día siguiente">
                  <Icon name="right" size={18} stroke={3} />
                </DateButton>
              </DateGroup>
              <Actions>
                <PrimaryButton type="button">
                  <Icon name="rocket" size={30} />
                  Reoptimizar rutas
                </PrimaryButton>
                <RoundButton type="button" aria-label="Añadir">
                  <Icon name="plus" size={28} />
                </RoundButton>
                <RoundButton type="button" $green aria-label="Descargar">
                  <Icon name="cloud" size={30} />
                </RoundButton>
                <RoundButton type="button" $green aria-label="Bloquear">
                  <Icon name="lock" size={29} />
                </RoundButton>
                <RoundButton type="button" aria-label="Enviar">
                  <Icon name="mail" size={30} />
                </RoundButton>
              </Actions>
            </Toolbar>
            <TitleRow>
              <RouteTitle>
                <Dot $size="34px" />
                Rutas - Paul Wagner | v5
                <BareButton type="button" aria-label="Ruta siguiente">
                  <Icon name="next" size={34} />
                </BareButton>
              </RouteTitle>
              <CloseButton type="button" aria-label="Cerrar">
                <Icon name="close" size={17} />
              </CloseButton>
            </TitleRow>
            <Content>
              <Columns>
                <div>
                  <Stats>
                    {stats.map(([icon, text]) => (
                      <Stat key={text}>
                        <Icon name={icon} size={icon === 'road' || icon === 'car' ? 38 : 32} />
                        {text}
                      </Stat>
                    ))}
                  </Stats>
                  <MapBox>
                    <CityMap />
                    <ZoomButton type="button" aria-label="Acercar">
                      <Icon name="plus" size={32} stroke={4} />
                    </ZoomButton>
                  </MapBox>
                </div>
                <div>
                  <FilterButton type="button">
                    Filtrar la pantalla
                    <Icon name="down" size={18} />
                  </FilterButton>
                  <Banner>
                    <Icon name="flag" size={33} />
                    <div>
                      <p><b>Hora de inicio prevista de la ruta :</b> 25/09/2025 08:00</p>
                      <p><b>Salida desde el parking del vehículo :</b> 92 Impasse du Sergent Blandan, Nancy, France</p>
                    </div>
                  </Banner>
                  <Stop>
                    <StopHead>
                      <StopNumber>1</StopNumber>
                      <StopInfo>
                        <StopName>Claire Martin</StopName>
                        <p><b>Dirección :</b> 95 avenue Foch, 54000 Nancy</p>
                      </StopInfo>
                      <TimeTag>08:02</TimeTag>
                      <BareButton type="button" aria-label="Más opciones">
                        <Icon name="dots" size={24} />
                      </BareButton>
                      <Menu>
                        {menuItems.map(([icon, text], i) => (
                          <li key={text}>
                            <MenuButton type="button" $active={i === 0}>
                              <Icon name={icon} size={21} />
                              {text}
                            </MenuButton>
                          </li>
                        ))}
                        <StepBadge>6</StepBadge>
                      </Menu>
                    </StopHead>
                    <Section $height="151px" $pad="14px">
                      <SectionTitle>CLIENTE</SectionTitle>
                      <p><b>Horas de apertura :</b> Siempre abierto</p>
                      <Attachments />
                    </Section>
                    <Section $height="260px" $pad="23px">
                      <SectionTitle>ENTREGA</SectionTitle>
                      <div>
                        <p><b>Duración</b> : 20min</p>
                        <p><b>Repartidor asignado :</b></p>
                        <Assigned><Dot $size="17px" />Paul Wagner | v5</Assigned>
                        <p><b>Id :</b> 35340693</p>
                      </div>
                      <Attachments />
                    </Section>
                  </Stop>
                </div>
              </Columns>
              <Track>
                <Thumb />
              </Track>
            </Content>
          </Main>
        </Body>
      </Frame>
    </>
  )
}

export default App
